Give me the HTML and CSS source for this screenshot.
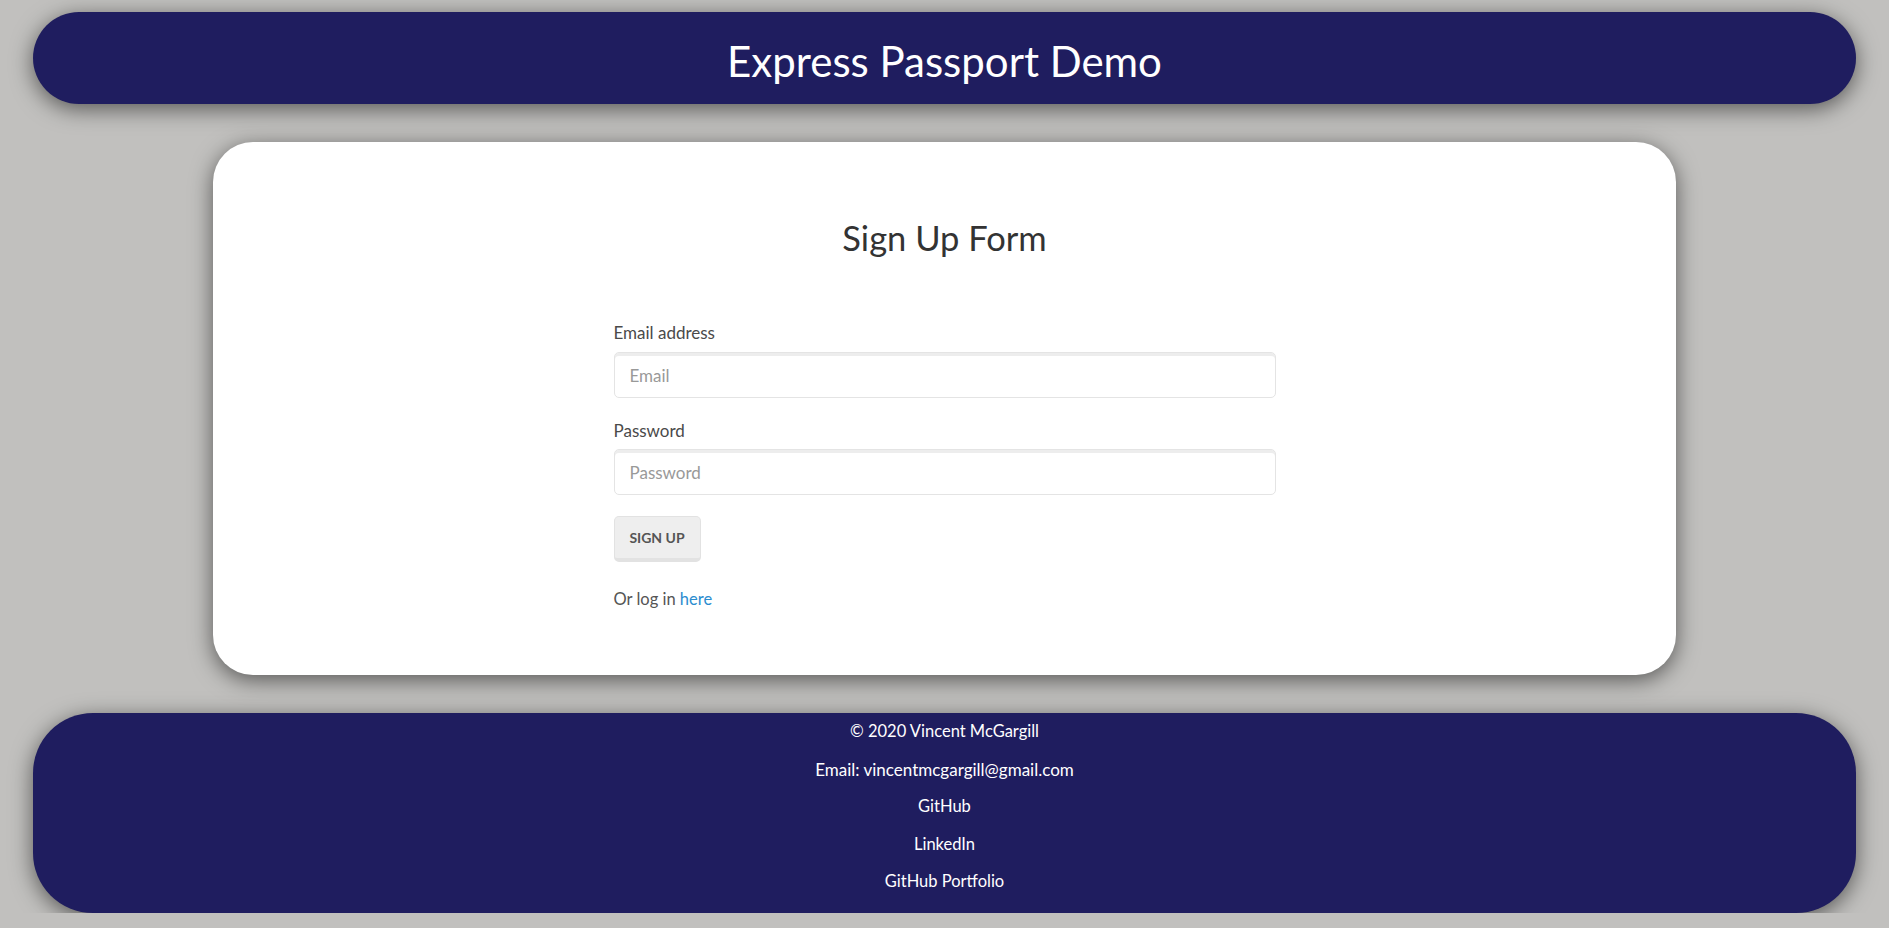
FILE: index.html
```html
<!DOCTYPE html>
<html lang="en">
<head>
<meta charset="utf-8">
<title>Express Passport Demo</title>
<link rel="stylesheet" href="styles.css">
</head>
<body>
<header class="site-header">
  <h1 class="site-title">Express Passport Demo</h1>
</header>
<main class="card">
  <h2 class="card-title">Sign Up Form</h2>
  <form class="signup-form">
    <div class="form-group">
      <label class="form-label" for="email">Email address</label>
      <input class="form-control" type="email" id="email" placeholder="Email">
    </div>
    <div class="form-group form-group-last">
      <label class="form-label" for="password">Password</label>
      <input class="form-control" type="password" id="password" placeholder="Password">
    </div>
    <button class="btn" type="submit">Sign Up</button>
    <p class="login-note">Or log in <a class="link" href="#">here</a></p>
  </form>
</main>
<footer class="site-footer">
  <p class="footer-line">© 2020 Vincent McGargill</p>
  <p class="footer-line">Email: vincentmcgargill@gmail.com</p>
  <p class="footer-line"><a class="footer-link" href="#">GitHub</a></p>
  <p class="footer-line"><a class="footer-link" href="#">LinkedIn</a></p>
  <p class="footer-line"><a class="footer-link" href="#">GitHub Portfolio</a></p>
</footer>
</body>
</html>
```
FILE: styles.css
```css
* { box-sizing: border-box; }
html, body { margin: 0; padding: 0; }
body {
  background: #c1c0be;
  font-family: Lato, "Liberation Sans", sans-serif;
  color: #333;
  padding-top: 12px;
}
.site-header {
  margin: 0 33px;
  height: 92px;
  padding-top: 24px;
  background: #1f1d5f;
  border-radius: 60px;
  box-shadow: 0 5px 22px rgba(0,0,0,0.55);
  text-align: center;
}
.site-title {
  margin: 0;
  font-size: 42px;
  line-height: 50px;
  font-weight: 400;
  color: #fff;
}
.card {
  display: block;
  margin: 38px 213px 0;
  height: 533px;
  padding-top: 76px;
  background: #fff;
  border-radius: 40px;
  box-shadow: 0 5px 22px rgba(0,0,0,0.55);
}
.card-title {
  margin: 0 0 65px;
  text-align: center;
  font-size: 34.5px;
  line-height: 40px;
  font-weight: 400;
  color: #333;
}
.signup-form {
  width: 662px;
  margin: 0 auto;
}
.form-group { margin-bottom: 23px; }
.form-group-last { margin-bottom: 21px; }
.form-label {
  display: block;
  font-size: 17px;
  line-height: 20px;
  margin-bottom: 9px;
  color: #4a4a4a;
}
.form-group-last .form-label { margin-bottom: 8px; }
.form-control {
  display: block;
  width: 100%;
  height: 46px;
  padding: 0 15px;
  border: 1px solid #e4e4e4;
  border-radius: 5px;
  box-shadow: inset 0 3px 0 rgba(0,0,0,0.07);
  font-family: inherit;
  font-size: 17px;
  color: #555;
  background: #fff;
  outline: none;
}
.form-control::placeholder { color: #999; }
.btn {
  display: block;
  height: 46px;
  width: 87px;
  padding: 0;
  background: #eeeeee;
  border: 1px solid #e2e2e2;
  border-bottom-width: 4px;
  border-radius: 5px;
  font-family: inherit;
  font-weight: 700;
  font-size: 14px;
  text-transform: uppercase;
  color: #555;
}
.login-note {
  margin: 25px 0 0;
  font-size: 16.5px;
  line-height: 24px;
  color: #555;
}
.link { color: #2a8ccf; text-decoration: none; }
.site-footer {
  margin: 38px 33px 0;
  padding: 0 0 12.5px;
  background: #1f1d5f;
  border-radius: 60px;
  box-shadow: 0 5px 22px rgba(0,0,0,0.55);
  text-align: center;
  color: #fff;
}
.footer-line {
  margin: 0;
  font-size: 16.5px;
  line-height: 37.5px;
}
.footer-line:nth-child(2) { font-size: 17px; }
.footer-link { color: #fff; text-decoration: none; }
```
